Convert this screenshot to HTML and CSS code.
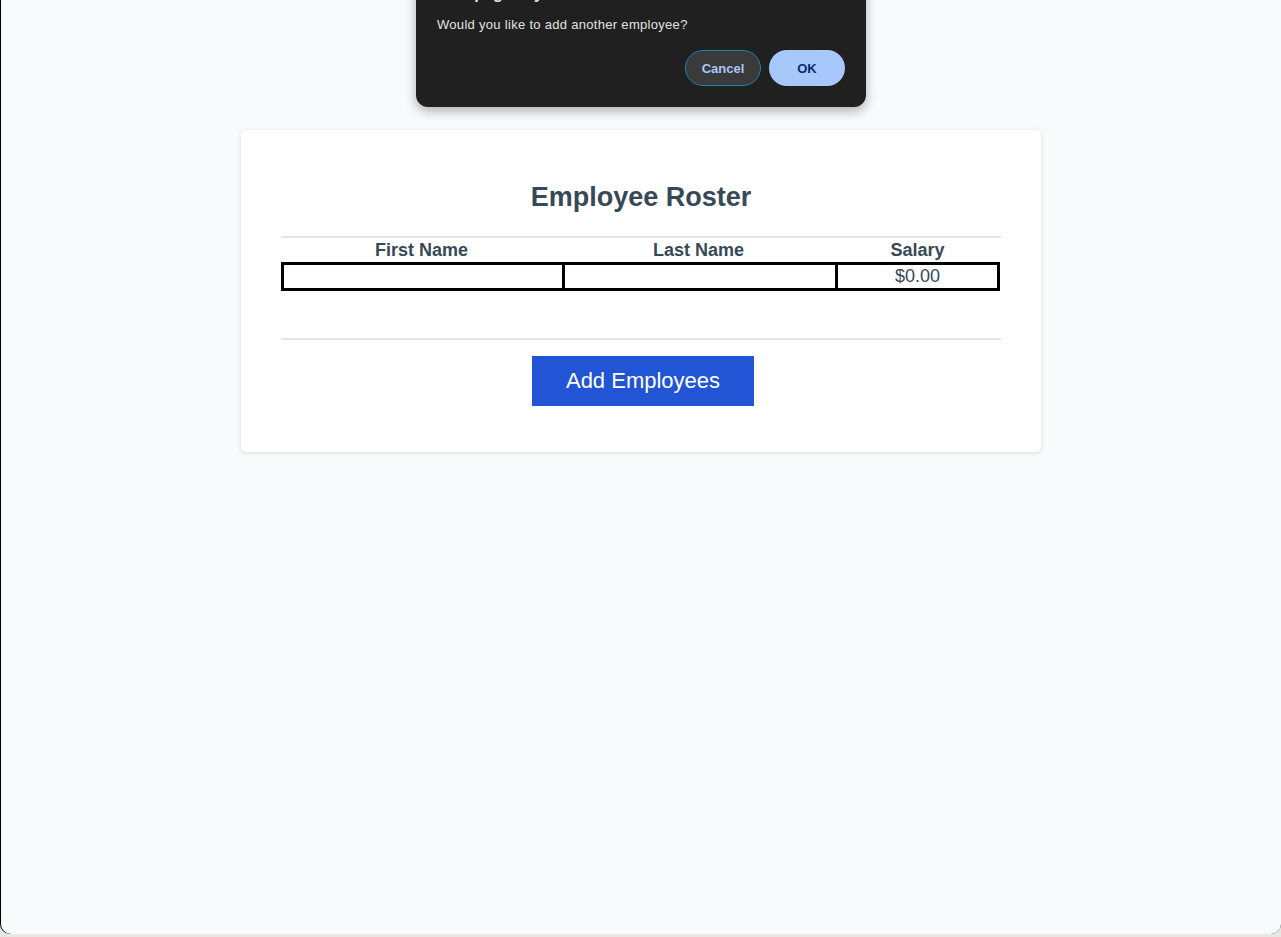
FILE: index.html
```html
<!DOCTYPE html>
<html lang="en">
<head>
<meta charset="utf-8">
<title>Employee Roster</title>
<link rel="stylesheet" href="styles.css">
</head>
<body>
<div class="frame">
  <div class="page">
    <main class="card">
      <h1 class="title">Employee Roster</h1>
      <div class="rule"></div>
      <table class="roster">
        <colgroup>
          <col class="c1"><col class="c2"><col class="c3">
        </colgroup>
        <thead>
          <tr><th>First Name</th><th>Last Name</th><th>Salary</th></tr>
        </thead>
        <tbody>
          <tr class="row"><td></td><td></td><td class="last">$0.00</td></tr>
        </tbody>
      </table>
      <div class="rule rule-bottom"></div>
      <div class="actions">
        <button class="add-btn" type="button">Add Employees</button>
      </div>
    </main>

    <div class="dialog" role="dialog">
      <div class="dialog-title">This page says</div>
      <div class="dialog-msg">Would you like to add another employee?</div>
      <div class="dialog-buttons">
        <button class="dbtn cancel" type="button">Cancel</button>
        <button class="dbtn ok" type="button">OK</button>
      </div>
    </div>
  </div>
</div>
</body>
</html>
```

FILE: styles.css
```css
html, body {
  margin: 0;
  padding: 0;
}
body {
  background: #e9e7e0;
  width: 1281px;
  height: 937px;
  overflow: hidden;
  font-family: "Liberation Sans", Arial, sans-serif;
}
.frame {
  background: #000;
  height: 934px;
  padding-left: 1px;
  border-radius: 0 0 10px 10px;
}
.page {
  position: relative;
  height: 934px;
  background: #f9fafb;
  border-radius: 0 0 10px 10px;
  padding-top: 130px;
  box-sizing: border-box;
  overflow: hidden;
}
.card {
  width: 800px;
  margin-left: 240px;
  box-sizing: border-box;
  background: #fff;
  border-radius: 5px;
  box-shadow: 0 1px 5px rgba(0, 0, 0, 0.12);
  padding: 52px 40px 46px;
}
.title {
  margin: 0;
  text-align: center;
  font-size: 27px;
  line-height: 30px;
  font-weight: 700;
  color: #374956;
}
.rule {
  height: 2px;
  background: #e6e6e6;
  margin-top: 24px;
}
.rule-bottom {
  margin-top: 47px;
}
.roster {
  width: 719px;
  border-collapse: separate;
  border-spacing: 0;
  table-layout: fixed;
  color: #374956;
}
.c1 { width: 281px; }
.c2 { width: 273px; }
.c3 { width: 165px; }
.roster th {
  font-size: 18px;
  font-weight: 700;
  line-height: 24px;
  height: 24px;
  padding: 0;
  text-align: center;
}
.roster td {
  border-top: 3px solid #000;
  border-bottom: 3px solid #000;
  border-left: 3px solid #000;
  height: 23px;
  padding: 0;
  font-size: 18px;
  line-height: 23px;
  text-align: center;
}
.roster td.last {
  border-right: 3px solid #000;
}
.actions {
  display: flex;
  justify-content: center;
  margin-top: 16px;
  padding-left: 4px;
}
.add-btn {
  width: 222px;
  height: 50px;
  border: none;
  background: #2255d6;
  color: #fff;
  font-family: "Liberation Sans", Arial, sans-serif;
  font-size: 22px;
  padding: 0;
}
.dialog {
  position: absolute;
  left: 415px;
  top: -36px;
  width: 450px;
  box-sizing: border-box;
  background: #202020;
  border-radius: 12px;
  box-shadow: 0 4px 12px rgba(0, 0, 0, 0.3);
  padding: 20px 21px 21px;
  color: #e3e3e3;
}
.dialog-title {
  font-size: 16px;
  line-height: 20px;
  font-weight: 700;
}
.dialog-msg {
  margin-top: 13px;
  font-size: 13px;
  letter-spacing: 0.3px;
  line-height: 16px;
}
.dialog-buttons {
  display: flex;
  justify-content: flex-end;
  gap: 8px;
  margin-top: 17px;
}
.dbtn {
  width: 76px;
  height: 36px;
  border-radius: 18px;
  font-family: "Liberation Sans", Arial, sans-serif;
  font-size: 13px;
  font-weight: 700;
  padding: 0;
  box-sizing: border-box;
}
.cancel {
  background: #3a3a3a;
  color: #a8c7fa;
  border: 1px solid #1f7fb3;
}
.ok {
  background: #a8c7fa;
  color: #062e6f;
  border: none;
}
```
